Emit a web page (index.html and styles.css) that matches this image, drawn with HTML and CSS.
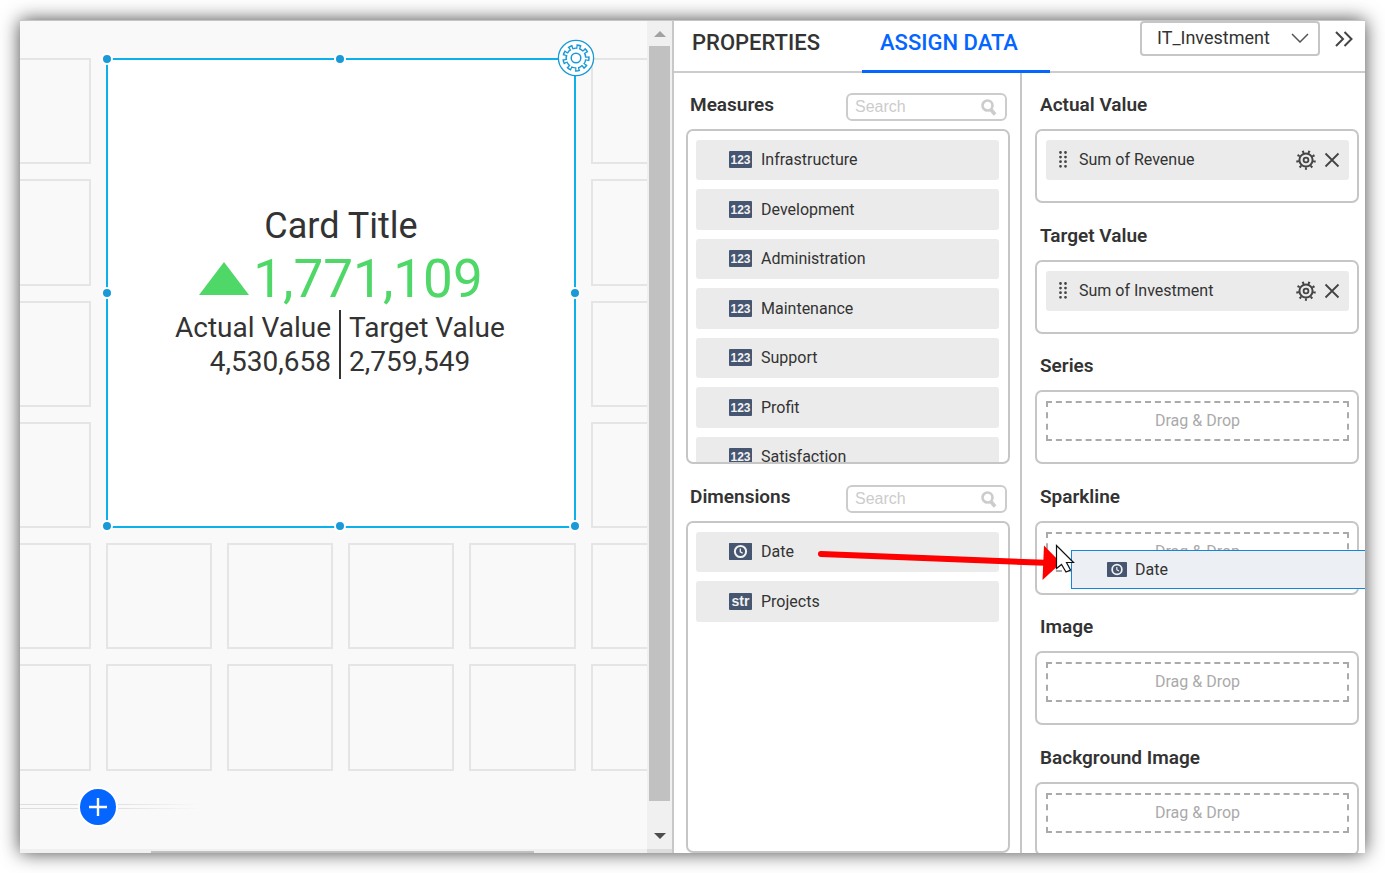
FILE: index.html
```
<!DOCTYPE html>
<html lang="en">
<head>
<meta charset="utf-8">
<title>Dashboard Designer</title>
<link rel="stylesheet" href="styles.css">
</head>
<body>
<svg class="defs" aria-hidden="true">
  <symbol id="clock" viewBox="0 0 23 17">
    <rect width="23" height="17" rx="1" fill="#465570"/>
    <circle cx="11.5" cy="8.5" r="5.6" fill="none" stroke="#f2f2f2" stroke-width="2"/>
    <path d="M11.3 5.5v3.3l2.4 1.5" fill="none" stroke="#f2f2f2" stroke-width="1.3"/>
  </symbol>
  <symbol id="gear" viewBox="0 0 20 20">
    <g fill="none" stroke="#444">
      <circle cx="10" cy="10" r="6.6" stroke-width="2"/>
      <circle cx="10" cy="10" r="8.5" stroke-width="2.6" pathLength="90" stroke-dasharray="3.4 6.6" stroke-dashoffset="-.9"/>
      <circle cx="10" cy="10" r="2.4" stroke-width="1.8"/>
    </g>
  </symbol>
  <symbol id="close" viewBox="0 0 16 16">
    <path d="M1.500 1.500l13 13M14.500 1.500l-13 13" stroke="#444" stroke-width="1.8"/>
  </symbol>
  <symbol id="grip" viewBox="0 0 8 17">
    <path d="M1.500 1.500v15M6.500 1.500v15" stroke="#444" stroke-width="2.8" stroke-linecap="round" stroke-dasharray="0 4.6"/>
  </symbol>
  <symbol id="lens" viewBox="0 0 16 17">
    <circle cx="6.500" cy="6.500" r="5" fill="none" stroke="#ccc" stroke-width="2.600"/>
    <path d="M9.800 10.500l4.300 5" stroke="#ccc" stroke-width="3.600"/>
  </symbol>
</svg>

<main class="designer">
  <section class="canvas-pane">
    <div class="canvas">
      <div class="board">
        <div class="cell first"></div>
        <article class="card">
          <h1 class="card-title">Card Title</h1>
          <p class="card-kpi">
            <svg class="trend" viewBox="0 0 50 33"><path d="M25 0L50 33H0z" fill="#4fd768"/></svg>
            <span>1,771,109</span>
          </p>
          <div class="card-split">
            <p class="side actual">Actual Value<br>4,530,658</p>
            <p class="side target">Target Value<br>2,759,549</p>
          </div>
          <i class="handle nw"></i><i class="handle n"></i><i class="handle w"></i><i class="handle e"></i>
          <i class="handle sw"></i><i class="handle s"></i><i class="handle se"></i>
          <button class="card-settings" aria-label="Widget settings">
            <svg viewBox="0 0 38 38">
              <circle cx="19" cy="19" r="17.6" fill="#fff" stroke="#199ad6" stroke-width="1.3"/>
              <circle cx="19" cy="19" r="10.6" fill="#199ad6"/>
              <circle cx="19" cy="19" r="11.7" fill="none" stroke="#199ad6" stroke-width="4" pathLength="90" stroke-dasharray="5.6 4.4" stroke-dashoffset="2"/>
              <circle cx="19" cy="19" r="9.2" fill="#fff"/>
              <circle cx="19" cy="19" r="10.2" fill="none" stroke="#fff" stroke-width="4" pathLength="90" stroke-dasharray="2.4 7.6" stroke-dashoffset=".4"/>
              <circle cx="19" cy="19" r="4.8" fill="none" stroke="#199ad6" stroke-width="1.5"/>
            </svg>
          </button>
        </article>
        <div class="cell last"></div>
        <div class="cell first"></div><div class="cell last"></div>
        <div class="cell first"></div><div class="cell last"></div>
        <div class="cell first"></div><div class="cell last"></div>
        <div class="cell"></div><div class="cell"></div><div class="cell"></div><div class="cell"></div><div class="cell"></div><div class="cell"></div>
        <div class="cell"></div><div class="cell"></div><div class="cell"></div><div class="cell"></div><div class="cell"></div><div class="cell"></div>
      </div>
      <div class="add-row">
        <button class="add" aria-label="Add row"><svg viewBox="0 0 18 18"><path d="M9 0v18M0 9h18" stroke="#fff" stroke-width="2.4"/></svg></button>
      </div>
    </div>
    <div class="vbar">
      <svg viewBox="0 0 12 6"><path d="M6 0l6 6H0z" fill="#a2a2a2"/></svg>
      <div class="vthumb"></div>
      <svg class="vdown" viewBox="0 0 12 6"><path d="M0 0h12L6 6z" fill="#4d4d4d"/></svg>
    </div>
    <div class="hbar"><div class="hthumb"></div></div>
    <div class="corner"></div>
  </section>

  <section class="panel">
    <header class="panel-head">
      <nav class="tabs">
        <button class="tab">PROPERTIES</button>
        <button class="tab active">ASSIGN DATA</button>
      </nav>
      <div class="source">
        <select class="source-select" aria-label="Data source"><option>IT_Investment</option></select>
        <svg class="source-arrow" viewBox="0 0 18 10"><path d="M1 1l8 8 8-8" fill="none" stroke="#555" stroke-width="1.5"/></svg>
      </div>
      <button class="collapse" aria-label="Collapse panel"><svg viewBox="0 0 18 16"><path d="M1 1l7 7-7 7M9.500 1l7 7-7 7" fill="none" stroke="#444" stroke-width="2"/></svg></button>
    </header>

    <div class="panel-body">
      <div class="fields">
        <div class="fields-head">
          <h2 class="heading" id="measures">Measures</h2>
          <div class="search"><input type="text" placeholder="Search" aria-label="Search measures"><svg><use href="#lens"/></svg></div>
        </div>
        <ul class="list measures" aria-labelledby="measures">
          <li class="row"><b class="badge">123</b>Infrastructure</li>
          <li class="row"><b class="badge">123</b>Development</li>
          <li class="row"><b class="badge">123</b>Administration</li>
          <li class="row"><b class="badge">123</b>Maintenance</li>
          <li class="row"><b class="badge">123</b>Support</li>
          <li class="row"><b class="badge">123</b>Profit</li>
          <li class="row"><b class="badge">123</b>Satisfaction</li>
        </ul>
        <div class="fields-head second">
          <h2 class="heading" id="dimensions">Dimensions</h2>
          <div class="search"><input type="text" placeholder="Search" aria-label="Search dimensions"><svg><use href="#lens"/></svg></div>
        </div>
        <ul class="list dimensions" aria-labelledby="dimensions">
          <li class="row"><svg class="badge"><use href="#clock"/></svg>Date</li>
          <li class="row"><b class="badge str">str</b>Projects</li>
        </ul>
      </div>

      <div class="slots">
        <section class="slot"><h2 class="heading">Actual Value</h2>
          <div class="box"><div class="chip"><svg class="grip"><use href="#grip"/></svg><span class="chip-name">Sum of Revenue</span>
            <button class="icon-btn" aria-label="Settings"><svg class="i-gear"><use href="#gear"/></svg></button>
            <button class="icon-btn" aria-label="Remove"><svg class="i-close"><use href="#close"/></svg></button></div></div>
        </section>
        <section class="slot"><h2 class="heading">Target Value</h2>
          <div class="box"><div class="chip"><svg class="grip"><use href="#grip"/></svg><span class="chip-name">Sum of Investment</span>
            <button class="icon-btn" aria-label="Settings"><svg class="i-gear"><use href="#gear"/></svg></button>
            <button class="icon-btn" aria-label="Remove"><svg class="i-close"><use href="#close"/></svg></button></div></div>
        </section>
        <section class="slot"><h2 class="heading">Series</h2><div class="box"><div class="drop">Drag &amp; Drop</div></div></section>
        <section class="slot"><h2 class="heading">Sparkline</h2>
          <div class="box"><div class="drop">Drag &amp; Drop</div>
            <div class="ghost"><svg class="ghost-icon"><use href="#clock"/></svg>Date</div>
            <svg class="arrow" viewBox="0 0 260 44">
              <path d="M6 14L230 22.800" stroke="#fe0000" stroke-width="6" stroke-linecap="round"/>
              <path d="M229 5.500L246 23 227.500 40z" fill="#fe0000"/>
              <path d="M241.500 5.500V28.500L246.500 24.500L251 32L255.500 30L251.500 22.500L258.500 22.500Z" fill="#fff" stroke="#111" stroke-width="1.200"/>
            </svg>
          </div>
        </section>
        <section class="slot"><h2 class="heading">Image</h2><div class="box"><div class="drop">Drag &amp; Drop</div></div></section>
        <section class="slot"><h2 class="heading">Background Image</h2><div class="box"><div class="drop">Drag &amp; Drop</div></div></section>
      </div>
    </div>
  </section>
</main>
</body>
</html>
```
FILE: styles.css
```
* { box-sizing: border-box; }

body {
  margin: 0;
  height: 100vh;
  padding: 20px;
  overflow: hidden;
  background: #fff;
  color: #333;
  font-family: Roboto, sans-serif;
}

h1, h2, p, ul { margin: 0; padding: 0; }
ul { list-style: none; }
svg { display: block; }
button { padding: 0; border: 0; background: none; font: inherit; color: inherit; }
.defs { position: absolute; width: 0; height: 0; }

.designer {
  display: flex;
  height: 100%;
  overflow: hidden;
  border-top: 1px solid #c6c6c6;
  background: #fff;
  box-shadow: 0 0 18px rgba(0, 0, 0, .72);
}

/* Canvas */
.canvas-pane {
  flex: 1;
  min-width: 0;
  display: grid;
  grid-template: minmax(0, 1fr) 4px / minmax(0, 1fr) 25px;
}
.canvas { overflow: hidden; background: #f9f9f9; padding-top: 37px; }
.board {
  display: grid;
  grid-template-columns: 106px 106px 106px 106px 107px 106px;
  grid-template-rows: 106px 107px 106px 106px 106px 107px;
  gap: 15px;
  margin-left: -35px;
}
.cell { border: 2px solid #e5e5e5; }
.first { grid-column: 1; }
.last { grid-column: 6; }

.card {
  grid-area: 1 / 2 / 5 / 6;
  position: relative;
  display: flex;
  flex-direction: column;
  align-items: center;
  justify-content: center;
  padding-bottom: 4px;
  border: 2px solid #0cb0ea;
  background: #fff;
}
.card-title { font-size: 36px; line-height: 44px; font-weight: 400; }
.card-kpi {
  display: flex;
  align-items: center;
  gap: 4px;
  color: #4fd768;
  font-size: 53px;
  line-height: 62px;
}
.trend { width: 50px; height: 33px; }
.card-split { display: grid; grid-template-columns: 1fr 1fr; width: 100%; font-size: 28px; line-height: 34px; }
.side { padding: 1px 8px 0; }
.actual { text-align: right; border-right: 2px solid #333; }

.handle {
  position: absolute;
  width: 12px;
  height: 12px;
  border: 2px solid #fff;
  border-radius: 50%;
  background: #199ad6;
}
.nw, .n { top: -7px; }
.w, .e { top: 227px; }
.sw, .s, .se { bottom: -6px; }
.nw, .w, .sw { left: -7px; }
.n, .s { left: 226px; }
.e, .se { right: -7px; }
.card-settings { position: absolute; top: -21px; right: -21px; }
.card-settings svg { width: 38px; height: 38px; }

.add-row { display: flex; align-items: center; width: 181px; margin-top: 16px; padding-left: 58px;
  background: linear-gradient(90deg, #dedede, #dedede 50%, #f9f9f9) 0 17px / 100% 1px no-repeat,
    linear-gradient(90deg, #dedede, #dedede 50%, #f9f9f9) 0 21px / 100% 1px no-repeat; }
.add {
  display: grid;
  place-items: center;
  width: 40px;
  height: 40px;
  border: 2px solid #fff;
  border-radius: 50%;
  background: #0565ff;
}
.add svg { width: 18px; height: 18px; }

.vbar {
  display: grid;
  grid-template-rows: 25px 1fr 48px;
  justify-items: center;
  align-items: center;
  background: #f0f0f0;
}
.vbar svg { width: 12px; height: 6px; }
.vbar .vdown { align-self: end; margin-bottom: 10px; }
.vthumb { width: 21px; height: 100%; background: #c1c1c1; }
.hbar { padding: 2px 113px 0 131px; background: #f0f0f0; }
.hthumb { height: 2px; background: #bfbfbf; }
.corner { background: #dcdcdc; }

/* Data panel */
.panel {
  flex: 0 0 693px;
  display: flex;
  flex-direction: column;
  border-left: 2px solid #c8c8c8;
}
.panel-head { flex: none; display: flex; align-items: flex-start; height: 52px; border-bottom: 2px solid #ccc; }
.tabs { display: flex; flex: 1; }
.tab {
  width: 188px;
  height: 52px;
  padding: 0 0 7px 18px;
  border-bottom: 3px solid transparent;
  font-size: 22px;
  font-weight: 500;
  text-align: left;
}
.tab.active { border-color: #0565ff; color: #0565ff; }
.source { position: relative; }
.source-select {
  appearance: none;
  display: block;
  width: 180px;
  height: 35px;
  padding: 0 36px 2px 15px;
  border: 2px solid #c6c6c6;
  border-radius: 4px;
  background: #fff;
  color: #333;
  font: 18px Roboto, sans-serif;
}
.source-arrow { position: absolute; top: 12px; right: 11px; width: 18px; height: 10px; pointer-events: none; }
.collapse { margin: 10px 12px 0 15px; }
.collapse svg { width: 18px; height: 16px; }

.panel-body { flex: 1; min-height: 0; display: flex; }
.fields {
  flex: 1;
  min-width: 0;
  display: flex;
  flex-direction: column;
  padding: 20px 10px 0 12px;
}
.heading { font-size: 19px; line-height: 24px; font-weight: 600; }
.fields-head { display: flex; justify-content: space-between; padding: 0 3px 0 4px; margin-bottom: 8px; }
.second { margin-top: 21px; }
.search { position: relative; width: 161px; }
.search input {
  display: block;
  width: 100%;
  height: 28px;
  padding: 0 34px 0 7px;
  border: 2px solid #ccc;
  border-radius: 6px;
  background: #fff;
  font: 16px "Liberation Sans", sans-serif;
}
.search input::placeholder { color: #ccc; opacity: 1; }
.search svg { position: absolute; top: 6px; right: 10px; width: 16px; height: 17px; }

.list { overflow: hidden; padding: 9px 9px 0 8px; border: 2px solid #c6c6c6; border-radius: 7px; }
.measures { flex: 0 0 335px; }
.dimensions { flex: 1; }
.row {
  display: flex;
  align-items: center;
  gap: 9px;
  height: 40px;
  margin-bottom: 9px;
  padding: 0 0 1px 33px;
  border-radius: 3px;
  background: #ebebeb;
  font-size: 16px;
}
.row:nth-child(even) { height: 41px; }
.badge {
  width: 23px;
  height: 17px;
  border-radius: 1px;
  background: #465570;
  color: #f2f2f2;
  font: bold 12px/18px "Liberation Sans", sans-serif;
  text-align: center;
}
.str { font-size: 14px; line-height: 16px; }

.slots { flex: 0 0 345px; padding: 20px 6px 0 13px; border-left: 2px solid #c6c6c6; }
.slot { margin-bottom: 20px; }
.slot:nth-child(odd) { padding-bottom: 1px; }
.slot .heading { padding-left: 5px; margin-bottom: 12px; }
.box { position: relative; height: 74px; padding: 9px 8px 0 9px; border: 2px solid #c6c6c6; border-radius: 7px; }
.chip {
  display: flex;
  align-items: center;
  gap: 8px;
  height: 40px;
  padding: 0 9px 1px 13px;
  border-radius: 3px;
  background: #ebebeb;
  font-size: 16px;
}
.grip { width: 8px; height: 17px; }
.chip-name { flex: 1; padding-left: 4px; }
.i-gear { width: 20px; height: 20px; }
.i-close { width: 16px; height: 16px; }
.drop { height: 40px; border: 2px dashed #aaa; color: #aaa; font-size: 16px; line-height: 35px; text-align: center; }

.ghost {
  position: absolute;
  top: 27px;
  left: 34px;
  right: -9px;
  display: flex;
  align-items: center;
  gap: 8px;
  height: 39px;
  padding-left: 35px;
  border: 1px solid #0f87dd;
  background: #eceff3;
  font-size: 16px;
}
.ghost-icon { width: 20px; height: 15px; }
.arrow { position: absolute; top: 17px; left: -222px; width: 260px; height: 44px; }
```
